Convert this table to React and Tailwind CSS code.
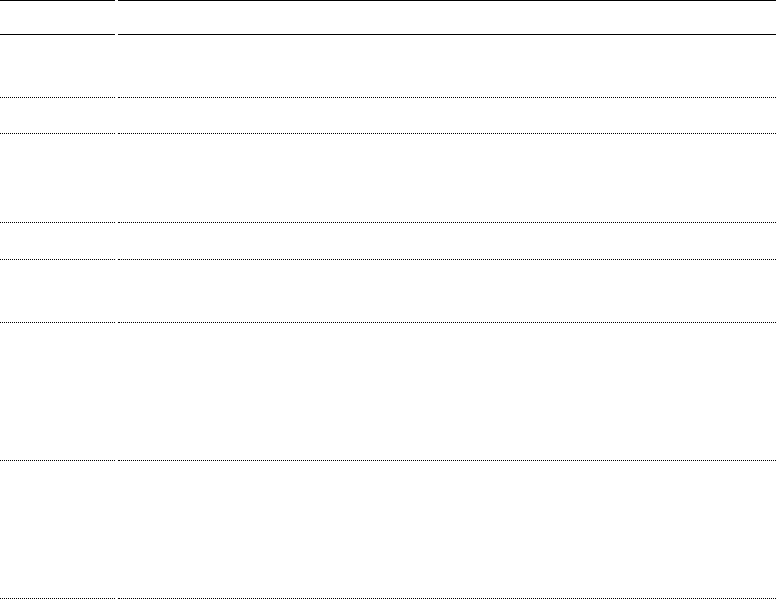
import React from "react";

const rows = [
  "h-[63px]",
  "h-[36px]",
  "h-[89px]",
  "h-[37px]",
  "h-[63px]",
  "h-[138px]",
  "h-[138px]",
];

function App() {
  return (
    <div className="w-[776px] h-[599px] overflow-hidden bg-white font-['Liberation_Sans',sans-serif] text-sm text-black">
      <div className="flex gap-[3px]">
        <div className="w-[115px] h-[35px] border-y border-black"></div>
        <div className="flex-1 h-[35px] border-y border-black"></div>
      </div>

      {rows.map((h, index) => (
        <div key={index} className="flex gap-[3px]">
          <div className={`w-[115px] border-b border-dotted border-black ${h}`}></div>
          <div className={`flex-1 border-b border-dotted border-black ${h}`}></div>
        </div>
      ))}
    </div>
  );
}

export default App;
